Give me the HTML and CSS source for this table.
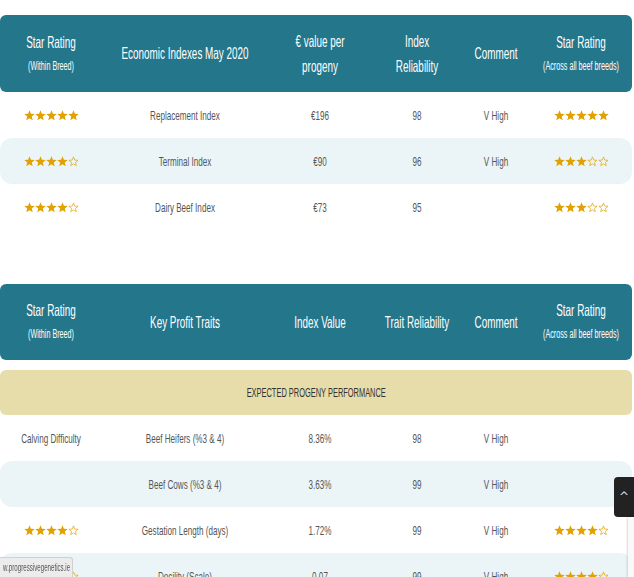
FILE: index.html
```html
<!DOCTYPE html>
<html>
<head>
<meta charset="utf-8">
<link rel="stylesheet" href="styles.css">
</head>
<body>
<svg class="defs" width="0" height="0" aria-hidden="true">
  <symbol id="sf" viewBox="0 0 24 24"><polygon points="12,0.6 15.06,8.39 23.41,8.89 16.95,14.21 19.05,22.31 12,17.8 4.95,22.31 7.05,14.21 0.59,8.89 8.94,8.39" fill="#e1a100"/></symbol>
  <symbol id="so" viewBox="0 0 24 24"><polygon points="12,2 14.7,8.9 22,9.4 16.3,14 18.1,21.1 12,17.2 5.9,21.1 7.7,14 2,9.4 9.3,8.9" fill="none" stroke="#e1a100" stroke-width="1.5" stroke-linejoin="round"/></symbol>
</svg>
<div class="page">
  <section class="table t1">
    <div class="row head">
      <div class="cell"><span class="ttl">Star Rating</span><span class="sub">(Within Breed)</span></div>
      <div class="cell"><span class="ttl">Economic Indexes May 2020</span></div>
      <div class="cell"><span class="ttl">€ value per<br>progeny</span></div>
      <div class="cell"><span class="ttl">Index<br>Reliability</span></div>
      <div class="cell"><span class="ttl">Comment</span></div>
      <div class="cell"><span class="ttl">Star Rating</span><span class="sub">(Across all beef breeds)</span></div>
    </div>
    <div class="row">
      <div class="stars"><svg><use href="#sf"/></svg><svg><use href="#sf"/></svg><svg><use href="#sf"/></svg><svg><use href="#sf"/></svg><svg><use href="#sf"/></svg></div>
      <div class="cell">Replacement Index</div>
      <div class="cell">€196</div>
      <div class="cell">98</div>
      <div class="cell">V High</div>
      <div class="stars"><svg><use href="#sf"/></svg><svg><use href="#sf"/></svg><svg><use href="#sf"/></svg><svg><use href="#sf"/></svg><svg><use href="#sf"/></svg></div>
    </div>
    <div class="row alt">
      <div class="stars"><svg><use href="#sf"/></svg><svg><use href="#sf"/></svg><svg><use href="#sf"/></svg><svg><use href="#sf"/></svg><svg><use href="#so"/></svg></div>
      <div class="cell">Terminal Index</div>
      <div class="cell">€90</div>
      <div class="cell">96</div>
      <div class="cell">V High</div>
      <div class="stars"><svg><use href="#sf"/></svg><svg><use href="#sf"/></svg><svg><use href="#sf"/></svg><svg><use href="#so"/></svg><svg><use href="#so"/></svg></div>
    </div>
    <div class="row">
      <div class="stars"><svg><use href="#sf"/></svg><svg><use href="#sf"/></svg><svg><use href="#sf"/></svg><svg><use href="#sf"/></svg><svg><use href="#so"/></svg></div>
      <div class="cell">Dairy Beef Index</div>
      <div class="cell">€73</div>
      <div class="cell">95</div>
      <div class="cell"></div>
      <div class="stars"><svg><use href="#sf"/></svg><svg><use href="#sf"/></svg><svg><use href="#sf"/></svg><svg><use href="#so"/></svg><svg><use href="#so"/></svg></div>
    </div>
  </section>

  <section class="table t2">
    <div class="row head">
      <div class="cell"><span class="ttl">Star Rating</span><span class="sub">(Within Breed)</span></div>
      <div class="cell"><span class="ttl">Key Profit Traits</span></div>
      <div class="cell"><span class="ttl">Index Value</span></div>
      <div class="cell"><span class="ttl">Trait Reliability</span></div>
      <div class="cell"><span class="ttl">Comment</span></div>
      <div class="cell"><span class="ttl">Star Rating</span><span class="sub">(Across all beef breeds)</span></div>
    </div>
    <div class="band"><span>EXPECTED PROGENY PERFORMANCE</span></div>
    <div class="row">
      <div class="cell">Calving Difficulty</div>
      <div class="cell">Beef Heifers (%3 &amp; 4)</div>
      <div class="cell">8.36%</div>
      <div class="cell">98</div>
      <div class="cell">V High</div>
      <div class="cell"></div>
    </div>
    <div class="row alt">
      <div class="cell"></div>
      <div class="cell">Beef Cows (%3 &amp; 4)</div>
      <div class="cell">3.63%</div>
      <div class="cell">99</div>
      <div class="cell">V High</div>
      <div class="cell"></div>
    </div>
    <div class="row">
      <div class="stars"><svg><use href="#sf"/></svg><svg><use href="#sf"/></svg><svg><use href="#sf"/></svg><svg><use href="#sf"/></svg><svg><use href="#so"/></svg></div>
      <div class="cell">Gestation Length (days)</div>
      <div class="cell">1.72%</div>
      <div class="cell">99</div>
      <div class="cell">V High</div>
      <div class="stars"><svg><use href="#sf"/></svg><svg><use href="#sf"/></svg><svg><use href="#sf"/></svg><svg><use href="#sf"/></svg><svg><use href="#so"/></svg></div>
    </div>
    <div class="row alt">
      <div class="stars"><svg><use href="#sf"/></svg><svg><use href="#sf"/></svg><svg><use href="#sf"/></svg><svg><use href="#sf"/></svg><svg><use href="#so"/></svg></div>
      <div class="cell">Docility (Scale)</div>
      <div class="cell">0.07</div>
      <div class="cell">99</div>
      <div class="cell">V High</div>
      <div class="stars"><svg><use href="#sf"/></svg><svg><use href="#sf"/></svg><svg><use href="#sf"/></svg><svg><use href="#sf"/></svg><svg><use href="#so"/></svg></div>
    </div>
  </section>
</div>
<a class="to-top" href="#">^</a>
<div class="badge"></div>
<div class="status"><span>w.progressivegenetics.ie</span></div>
</body>
</html>
```
FILE: styles.css
```css
html, body { margin: 0; padding: 0; background: #fff; overflow: hidden; }
body {
  font-family: "Liberation Sans", Arial, sans-serif;
  color: #555;
  height: 577px;
}
.defs { position: absolute; width: 0; height: 0; }
.page { width: 632px; padding-top: 15px; }
.table + .table { margin-top: 54px; }
.row {
  display: grid;
  grid-template-columns: 102px 166px 104px 90px 68px 102px;
  height: 46px;
  align-items: center;
  font-size: 13.5px;
}
.row.alt { background: #ebf5f8; border-radius: 12px; }
.row.head {
  height: 77px;
  background: #24768b;
  color: #fff;
  border-radius: 6px;
}
.t2 .row.head { height: 76px; margin-bottom: 10px; }
.cell {
  text-align: center;
  display: flex;
  flex-direction: column;
  align-items: center;
  justify-content: center;
  white-space: nowrap;
  transform: scaleX(0.6);
}
.ttl { font-size: 16.5px; line-height: 25px; }
.sub { font-size: 12px; line-height: 23px; }
.stars { display: flex; justify-content: center; gap: 0; }
.stars svg { width: 11px; height: 11px; display: block; }
.band {
  height: 45px;
  background: #e6ddab;
  border-radius: 6px;
  display: flex;
  align-items: center;
  justify-content: center;
  color: #333;
  font-size: 12px;
}
.band span { display: inline-block; white-space: nowrap; transform: scaleX(0.62); }
.to-top {
  position: fixed;
  right: 0;
  top: 477px;
  width: 20px;
  height: 40px;
  background: #222;
  color: #ddd;
  border-radius: 4px 0 0 4px;
  text-decoration: none;
  font-family: "DejaVu Sans", sans-serif;
  font-size: 12px;
  display: flex;
  align-items: center;
  justify-content: center;
}
.badge {
  position: fixed;
  right: 0;
  top: 517px;
  width: 6px;
  height: 60px;
  background: #f9f9f9;
  box-shadow: 0 0 3px rgba(0,0,0,.3);
}
.status {
  position: fixed;
  left: 0;
  bottom: 0;
  height: 19px;
  width: 72px;
  background: #ececec;
  border: 1px solid #d0d0d0;
  border-left: 0;
  border-bottom: 0;
  border-radius: 0 3px 0 0;
  color: #555;
  font-size: 11px;
  line-height: 19px;
  overflow: hidden;
  display: flex;
  justify-content: flex-end;
}
.status span { flex: none; white-space: nowrap; padding-right: 3px; transform: scaleX(0.56); transform-origin: right center; }
```
